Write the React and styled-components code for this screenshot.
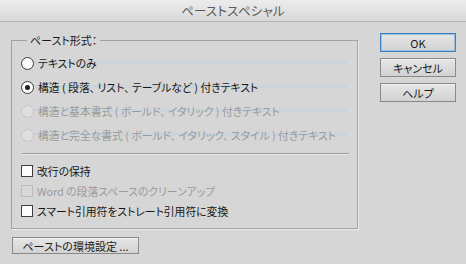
import React from "react";
import styled, { createGlobalStyle } from "styled-components";

const GlobalStyles = createGlobalStyle`
  html, body {
    margin: 0;
    padding: 0;
    background: #d6d6d6;
  }
  body {
    font-family: "Noto Sans CJK JP", "Noto Sans", sans-serif;
    font-feature-settings: "palt";
  }
`;

const Dialog = styled.div`
  width: 466px;
  height: 264px;
  background: #d6d6d6;
  display: flex;
  flex-direction: column;
  overflow: hidden;
`;

const TitleBar = styled.div`
  height: 21px;
  border-bottom: 1px solid #b4b4b4;
  background: linear-gradient(#ececec, #d9d9d9);
  display: flex;
  align-items: center;
  justify-content: center;
  font-size: 12.5px;
  color: #5a5a5a;
  letter-spacing: 0.2px;
`;

const Body = styled.div`
  display: flex;
  padding: 11px 10px 0 11px;
  gap: 22px;
`;

const LeftCol = styled.div`
  display: flex;
  flex-direction: column;
  width: 347px;
`;

const Group = styled.fieldset`
  margin: 0;
  padding: 4px 8px 7px 9px;
  border: 1px solid #a2a2a2;
  box-shadow: 1px 1px 0 #ececec;
  min-width: 0;
`;

const Legend = styled.legend`
  margin-left: 6px;
  padding: 0 3px 0 3px;
  font-size: 11px;
  line-height: 14px;
  color: #1a1a1a;
`;

const RadioRow = styled.div`
  height: 24px;
  display: flex;
  align-items: center;
  gap: 4px;
  white-space: nowrap;
  font-size: 10.8px;
  color: ${(p) => (p.disabled ? "#9a9a9a" : "#161616")};
  background: linear-gradient(
    transparent 10px,
    rgba(192, 210, 222, 0.5) 10px,
    rgba(192, 210, 222, 0.5) 13px,
    transparent 13px
  );
  background-size: calc(100% - 2px) 100%;
  background-repeat: no-repeat;
`;

const RadioCircle = styled.span`
  width: 11px;
  height: 11px;
  border-radius: 50%;
  border: 1px solid ${(p) => (p.disabled ? "#c4c4c4" : "#3c3c3c")};
  background: ${(p) => (p.disabled ? "#dedede" : "#fbfbfb")};
  display: flex;
  align-items: center;
  justify-content: center;
  flex: none;
  &::after {
    content: "";
    width: 5px;
    height: 5px;
    border-radius: 50%;
    background: #1a1a1a;
    display: ${(p) => (p.checked ? "block" : "none")};
  }
`;

const Divider = styled.div`
  height: 1px;
  margin: 6px 0 7px 1px;
  background: #9c9c9c;
  box-shadow: 0 1px 0 #ececec;
`;

const CheckRow = styled.div`
  height: 20px;
  display: flex;
  align-items: center;
  gap: 4px;
  white-space: nowrap;
  font-size: 10.8px;
  color: ${(p) => (p.disabled ? "#9a9a9a" : "#161616")};
`;

const CheckBox = styled.span`
  width: 10px;
  height: 10px;
  border: 1px solid ${(p) => (p.disabled ? "#bcbcbc" : "#3c3c3c")};
  background: ${(p) => (p.disabled ? "#d8d8d8" : "#fbfbfb")};
  flex: none;
`;

const Button = styled.button`
  width: ${(p) => p.width || 76}px;
  height: ${(p) => p.height || 19}px;
  padding: 0;
  margin: 0;
  font-family: inherit;
  font-feature-settings: "palt";
  font-size: 11px;
  white-space: nowrap;
  color: #1a1a1a;
  background: linear-gradient(#e6e6e6, #d2d2d2);
  border: 1px solid ${(p) => (p.primary ? "#3d7fc0" : "#8a8a8a")};
  box-shadow: ${(p) => (p.primary ? "inset 0 0 0 1px #9ec0e2" : "inset 0 1px 0 #f2f2f2")};
  display: flex;
  align-items: center;
  justify-content: center;
`;

const RightCol = styled.div`
  display: flex;
  flex-direction: column;
  gap: 6px;
`;

const BottomRow = styled.div`
  margin-top: 8px;
  padding-left: 1px;
`;

export default function App() {
  return (
    <Dialog>
      <GlobalStyles />
      <TitleBar>ペーストスペシャル</TitleBar>
      <Body>
        <LeftCol>
          <Group>
            <Legend>ペースト形式：</Legend>
            <RadioRow>
              <RadioCircle />
              テキストのみ
            </RadioRow>
            <RadioRow>
              <RadioCircle checked />
              構造 ( 段落、 リスト、 テーブルなど ) 付きテキスト
            </RadioRow>
            <RadioRow disabled>
              <RadioCircle disabled />
              構造と基本書式 ( ボールド、 イタリック ) 付きテキスト
            </RadioRow>
            <RadioRow disabled>
              <RadioCircle disabled />
              構造と完全な書式 ( ボールド、 イタリック、 スタイル ) 付きテキスト
            </RadioRow>
            <Divider />
            <CheckRow>
              <CheckBox />
              改行の保持
            </CheckRow>
            <CheckRow disabled>
              <CheckBox disabled />
              Word の段落スペースのクリーンアップ
            </CheckRow>
            <CheckRow>
              <CheckBox />
              スマート引用符をストレート引用符に変換
            </CheckRow>
          </Group>
          <BottomRow>
            <Button width={127} height={17}>ペーストの環境設定 ...</Button>
          </BottomRow>
        </LeftCol>
        <RightCol>
          <Button primary>OK</Button>
          <Button>キャンセル</Button>
          <Button>ヘルプ</Button>
        </RightCol>
      </Body>
    </Dialog>
  );
}
